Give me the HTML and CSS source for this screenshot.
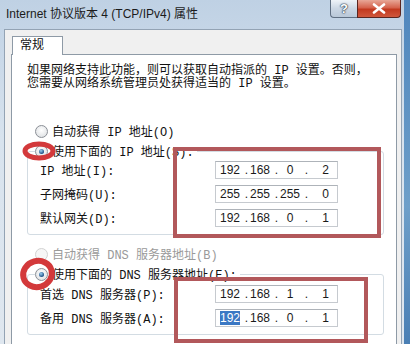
FILE: index.html
```html
<!DOCTYPE html>
<html lang="zh-CN">
<head>
    <meta charset="UTF-8">
    <meta name="viewport" content="width=device-width, initial-scale=1.0">
    <title>Internet 协议版本 4 (TCP/IPv4) 属性</title>
    <link rel="stylesheet" href="styles.css">
</head>
<body>
    <div class="window">
        <div class="titlebar">
            <span class="title">Internet 协议版本 4 (TCP/IPv4) 属性</span>
            <div class="caption">
                <span class="cap-btn help">?</span>
                <span class="cap-btn close">
                    <svg width="14" height="11" viewBox="0 0 14 11"><path d="M2 1.5 L12 9.5 M12 1.5 L2 9.5" stroke="#fff" stroke-width="2.6" stroke-linecap="round"/></svg>
                </span>
            </div>
        </div>
        <div class="client">
            <div class="tabs"><span class="tab">常规</span></div>
            <div class="panel">
                <p class="intro">如果网络支持此功能，则可以获取自动指派的 IP 设置。否则，<br>您需要从网络系统管理员处获得适当的 IP 设置。</p>

                <div class="option"><span class="radio"></span>自动获得 IP 地址(O)</div>
                <fieldset class="group">
                    <legend class="option"><span class="radio checked"></span>使用下面的 IP 地址(S):</legend>
                    <div class="field">
                        <label>IP 地址(I):</label>
                        <div class="ip"><span class="oct">192</span><span class="dot">.</span><span class="oct">168</span><span class="dot">.</span><span class="oct">0</span><span class="dot">.</span><span class="oct last">2</span></div>
                    </div>
                    <div class="field">
                        <label>子网掩码(U):</label>
                        <div class="ip"><span class="oct">255</span><span class="dot">.</span><span class="oct">255</span><span class="dot">.</span><span class="oct">255</span><span class="dot">.</span><span class="oct last">0</span></div>
                    </div>
                    <div class="field">
                        <label>默认网关(D):</label>
                        <div class="ip"><span class="oct">192</span><span class="dot">.</span><span class="oct">168</span><span class="dot">.</span><span class="oct">0</span><span class="dot">.</span><span class="oct last">1</span></div>
                    </div>
                </fieldset>

                <div class="option disabled"><span class="radio"></span>自动获得 DNS 服务器地址(B)</div>
                <fieldset class="group dns">
                    <legend class="option"><span class="radio checked"></span>使用下面的 DNS 服务器地址(E):</legend>
                    <div class="field">
                        <label>首选 DNS 服务器(P):</label>
                        <div class="ip"><span class="oct">192</span><span class="dot">.</span><span class="oct">168</span><span class="dot">.</span><span class="oct">1</span><span class="dot">.</span><span class="oct last">1</span></div>
                    </div>
                    <div class="field">
                        <label>备用 DNS 服务器(A):</label>
                        <div class="ip"><span class="oct"><span class="selected">192</span></span><span class="dot">.</span><span class="oct">168</span><span class="dot">.</span><span class="oct">0</span><span class="dot">.</span><span class="oct last">1</span></div>
                    </div>
                </fieldset>
            </div>
        </div>

        <!-- red annotation marks drawn over the dialog -->
        <div class="mark mark-ip"></div>
        <div class="mark mark-dns"></div>
        <svg class="ring ring-ip" width="40" height="26" viewBox="0 0 40 26">
            <ellipse cx="19" cy="13" rx="14" ry="7" fill="none" stroke="#d3393b" stroke-width="5"/>
        </svg>
        <svg class="ring ring-dns" width="42" height="38" viewBox="0 0 42 38">
            <ellipse cx="20.5" cy="19" rx="14.5" ry="13" fill="none" stroke="#d3393b" stroke-width="6" transform="rotate(-15 20.5 19)"/>
        </svg>
    </div>
</body>
</html>
```

FILE: styles.css
```css
body {
    margin: 0;
    background: linear-gradient(#4f86bd, #6e9fc9 60%, #4a7fb4);
    font-family: "Liberation Mono", "Noto Sans CJK SC", monospace;
    font-size: 12px;
    color: #111;
}
.window {
    position: relative;
    width: 404px;
    height: 344px;
    overflow: hidden;
    background: linear-gradient(#bfd1e4, #d8e3ee 40%, #dfe7ef);
}
.titlebar {
    display: flex;
    align-items: flex-start;
    height: 29px;
}
.title {
    padding-left: 6px;
    line-height: 28px;
    font-family: "Liberation Sans", "Noto Sans CJK SC", sans-serif;
    font-size: 12px;
    color: #1b1b1b;
}
.caption {
    display: flex;
    margin-left: auto;
    margin-right: 3px;
}
.cap-btn {
    display: flex;
    align-items: center;
    justify-content: center;
    height: 18px;
    box-sizing: border-box;
    border: 1px solid #5f6f82;
    border-top: none;
}
.help {
    width: 27px;
    border-right: none;
    border-radius: 0 0 0 4px;
    background: linear-gradient(#eef3f8, #cbd7e4 50%, #b9c8d8);
    font-family: "Liberation Sans", sans-serif;
    font-weight: bold;
    font-size: 13px;
    color: #fff;
    text-shadow: 0 0 1px #2d3c4e, 0 0 1px #2d3c4e, 0 0 2px #2d3c4e;
}
.close {
    width: 44px;
    border-color: #5a2620;
    border-radius: 0 0 4px 0;
    background: linear-gradient(#e8a797, #d5634d 45%, #c2391f 55%, #d0573c);
}
.client {
    margin-left: 4px;
    width: 398px;
    height: 315px;
    box-sizing: border-box;
    border: 1px solid #93a3b4;
    border-bottom: none;
    background: #f0f0f0;
    padding: 6px 0 0 6px;
}
.tabs {
    display: flex;
}
.tab {
    position: relative;
    z-index: 1;
    margin-left: 1px;
    margin-bottom: -1px;
    width: 51px;
    height: 19px;
    box-sizing: border-box;
    border: 1px solid #8e9aa6;
    border-bottom: none;
    background: #fff;
    padding-left: 7px;
    line-height: 18px;
}
.panel {
    width: 386px;
    height: 320px;
    box-sizing: border-box;
    border: 1px solid #8e9aa6;
    background: #fff;
    padding: 10px 0 0 15px;
}
.intro {
    margin: 0;
    line-height: 13px;
}
.option {
    display: flex;
    align-items: center;
    height: 20px;
    margin: 30px 0 0 8px;
    white-space: nowrap;
}
.radio {
    position: relative;
    flex: none;
    width: 13px;
    height: 13px;
    box-sizing: border-box;
    margin-right: 4px;
    border: 1px solid #8b8f96;
    border-radius: 50%;
    background: radial-gradient(circle at 50% 40%, #fff, #d9dcdf);
}
.radio.checked::after {
    content: "";
    position: absolute;
    left: 3px;
    top: 3px;
    width: 5px;
    height: 5px;
    border-radius: 50%;
    background: radial-gradient(circle at 40% 35%, #9bd0f2, #1c4f86 70%);
}
.disabled {
    color: #9a9a9a;
    margin-top: 9px;
}
.disabled .radio {
    border-color: #d2d2d2;
    background: #f6f6f6;
}
.group {
    width: 357px;
    box-sizing: border-box;
    margin: 0;
    padding: 0 0 7px 0;
    border: 1px solid #d3dce3;
    border-radius: 3px;
}
.group legend {
    margin: 0 0 0 7px;
    padding: 0 3px 0 0;
}
.field {
    display: flex;
    align-items: center;
    height: 18px;
    margin-top: 6px;
}
.field:first-of-type {
    margin-top: 0;
}
.dns .field:first-of-type {
    margin-top: 1px;
}
.field label {
    flex: 0 0 187px;
    box-sizing: border-box;
    padding-left: 12px;
    white-space: nowrap;
}
.ip {
    display: flex;
    width: 123px;
    height: 18px;
    box-sizing: border-box;
    border: 1px solid #c6cacf;
    border-top-color: #aeb3b9;
    padding-left: 2px;
    font-family: "Liberation Sans", sans-serif;
    font-size: 12px;
    line-height: 16px;
    color: #1a1a1a;
}
.oct {
    width: 24px;
    text-align: center;
}
.oct.last {
    width: 21px;
    text-align: right;
}
.dot {
    width: 6px;
    text-align: right;
}
.selected {
    background: #3b78c4;
    color: #fff;
}
.mark {
    position: absolute;
    box-sizing: border-box;
    border: 4px solid #b2585b;
}
.mark-ip {
    left: 173px;
    top: 147px;
    width: 208px;
    height: 91px;
}
.mark-dns {
    left: 174px;
    top: 277px;
    width: 194px;
    height: 66px;
}
.ring {
    position: absolute;
}
.ring-ip {
    left: 20px;
    top: 138px;
}
.ring-dns {
    left: 17px;
    top: 255px;
}
```
